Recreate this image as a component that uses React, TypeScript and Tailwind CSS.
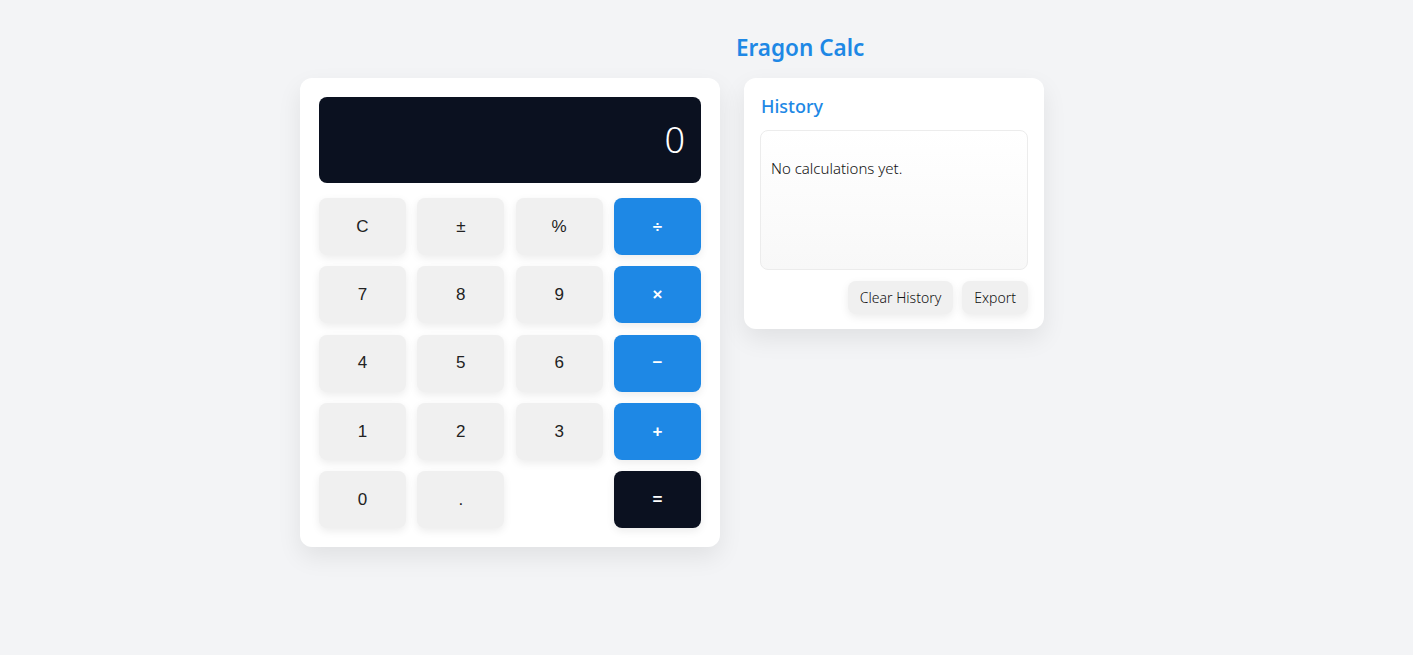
import React from "react";

type Key = { label: string; kind: "num" | "op" | "eq" | "blank" };

const keys: Key[] = [
  { label: "C", kind: "num" },
  { label: "±", kind: "num" },
  { label: "%", kind: "num" },
  { label: "÷", kind: "op" },
  { label: "7", kind: "num" },
  { label: "8", kind: "num" },
  { label: "9", kind: "num" },
  { label: "×", kind: "op" },
  { label: "4", kind: "num" },
  { label: "5", kind: "num" },
  { label: "6", kind: "num" },
  { label: "−", kind: "op" },
  { label: "1", kind: "num" },
  { label: "2", kind: "num" },
  { label: "3", kind: "num" },
  { label: "+", kind: "op" },
  { label: "0", kind: "num" },
  { label: ".", kind: "num" },
  { label: "", kind: "blank" },
  { label: "=", kind: "eq" },
];

const keyStyle: Record<Key["kind"], string> = {
  num: "bg-[#f0f0f0] text-[#222] shadow-[0_3px_8px_rgba(0,0,0,0.08)]",
  op: "bg-[#1e88e5] text-white font-bold shadow-[0_3px_8px_rgba(0,0,0,0.08)]",
  eq: "bg-[#0b1120] text-white font-bold shadow-[0_3px_8px_rgba(0,0,0,0.08)]",
  blank: "",
};

const App = () => {
  return (
    <div className="min-h-screen bg-[#f3f4f6] font-['Noto_Sans',sans-serif]">
      {/* ── Header ─────────────────────────── */}
      <div className="pt-[31px] pl-[736px]">
        <h1 className="text-[22.5px] leading-[34px] font-semibold text-[#1e88e5]">Eragon Calc</h1>
      </div>

      <div className="flex items-start gap-6 pl-[300px] mt-[13px]">
        {/* ── Calculator ─────────────────────────── */}
        <div className="w-[420px] bg-white rounded-xl p-[19px] shadow-[0_10px_25px_rgba(0,0,0,0.08)]">
          <div className="h-[86px] bg-[#0b1120] rounded-lg flex items-center justify-end pr-4">
            <span className="text-[36px] text-white font-light leading-none">0</span>
          </div>
          <div className="grid grid-cols-4 gap-x-[11.3px] gap-y-[11.3px] mt-[15px]">
            {keys.map((k, i) =>
              k.kind === "blank" ? (
                <div key={i} />
              ) : (
                <button
                  key={i}
                  type="button"
                  className={`h-[57px] rounded-lg text-[17px] font-['Liberation_Sans',Arial,sans-serif] ${keyStyle[k.kind]}`}
                >
                  {k.label}
                </button>
              )
            )}
          </div>
        </div>

        {/* ── History ─────────────────────────── */}
        <div className="w-[300px] bg-white rounded-xl px-4 pt-[14px] pb-[15px] shadow-[0_10px_25px_rgba(0,0,0,0.08)]">
          <h2 className="text-[18px] leading-[28px] font-medium text-[#1e88e5] pl-px">History</h2>
          <div className="mt-[10px] h-[140px] border border-[#ececec] rounded-lg bg-gradient-to-b from-white to-[#f8f8f8] px-[10px] pt-[26px]">
            <p className="text-[15px] font-light text-[#111]">No calculations yet.</p>
          </div>
          <div className="flex justify-end gap-[9px] mt-[11px]">
            <button
              type="button"
              className="h-[33px] px-3 rounded-lg bg-[#f0f0f0] text-[14px] font-light text-[#111] shadow-[0_3px_8px_rgba(0,0,0,0.08)]"
            >
              Clear History
            </button>
            <button
              type="button"
              className="h-[33px] px-3 rounded-lg bg-[#f0f0f0] text-[14px] font-light text-[#111] shadow-[0_3px_8px_rgba(0,0,0,0.08)]"
            >
              Export
            </button>
          </div>
        </div>
      </div>
    </div>
  );
};

export default App;
